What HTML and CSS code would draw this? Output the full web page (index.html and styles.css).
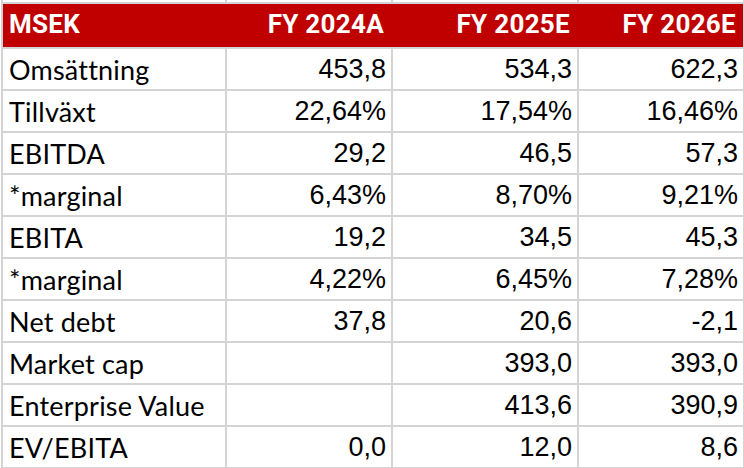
FILE: index.html
```html
<!DOCTYPE html>
<html>
<head>
<meta charset="utf-8">
<link rel="stylesheet" href="styles.css">
</head>
<body>
<div class="sheet">
  <div class="ghost"></div><div class="ghost"></div><div class="ghost"></div><div class="ghost"></div>
  <div class="head">
    <div class="hc lbl">MSEK</div>
    <div class="hc">FY 2024A</div>
    <div class="hc">FY 2025E</div>
    <div class="hc">FY 2026E</div>
  </div>
  <div class="c lbl">Omsättning</div><div class="c num">453,8</div><div class="c num">534,3</div><div class="c num">622,3</div>
  <div class="c lbl">Tillväxt</div><div class="c num">22,64%</div><div class="c num">17,54%</div><div class="c num">16,46%</div>
  <div class="c lbl">EBITDA</div><div class="c num">29,2</div><div class="c num">46,5</div><div class="c num">57,3</div>
  <div class="c lbl">*marginal</div><div class="c num">6,43%</div><div class="c num">8,70%</div><div class="c num">9,21%</div>
  <div class="c lbl">EBITA</div><div class="c num">19,2</div><div class="c num">34,5</div><div class="c num">45,3</div>
  <div class="c lbl">*marginal</div><div class="c num">4,22%</div><div class="c num">6,45%</div><div class="c num">7,28%</div>
  <div class="c lbl">Net debt</div><div class="c num">37,8</div><div class="c num">20,6</div><div class="c num">-2,1</div>
  <div class="c lbl">Market cap</div><div class="c num"></div><div class="c num">393,0</div><div class="c num">393,0</div>
  <div class="c lbl">Enterprise Value</div><div class="c num"></div><div class="c num">413,6</div><div class="c num">390,9</div>
  <div class="c lbl">EV/EBITA</div><div class="c num">0,0</div><div class="c num">12,0</div><div class="c num">8,6</div>
</div>
</body>
</html>
```

FILE: styles.css
```css
html, body {
  margin: 0;
  padding: 0;
  background: #ffffff;
}

.sheet {
  margin-left: 1px;
  display: grid;
  grid-template-columns: 222px 164px 184px 164px;
  grid-template-rows: 2px 43px repeat(10, 40px);
  gap: 2px;
  padding: 0 2px 2px 2px;
  width: max-content;
  background: #d4d4d4;
}

.ghost {
  background: #ffffff;
}

.head {
  grid-column: 1 / -1;
  display: grid;
  grid-template-columns: 222px 166px 186px 166px;
  margin-right: -2px;
  width: 740px;
  background: #c00000;
}

.hc {
  display: flex;
  align-items: flex-end;
  justify-content: flex-end;
  padding: 0 7px 10px 0;
  font-family: Roboto, "Liberation Sans", sans-serif;
  font-weight: 700;
  font-size: 26px;
  letter-spacing: 0.3px;
  line-height: 1;
  color: #ffffff;
}

.hc.lbl {
  justify-content: flex-start;
  padding-left: 6px;
}

.c {
  background: #ffffff;
  display: flex;
  align-items: flex-end;
  line-height: 1;
  color: #000000;
}

.c.lbl {
  font-family: Lato, "Open Sans", sans-serif;
  font-size: 27px;
  letter-spacing: 0.2px;
  padding: 0 0 6px 6px;
}

.c.num {
  justify-content: flex-end;
  font-family: "Liberation Sans", Arial, sans-serif;
  font-size: 27px;
  padding: 0 5px 6px 0;
}
```
